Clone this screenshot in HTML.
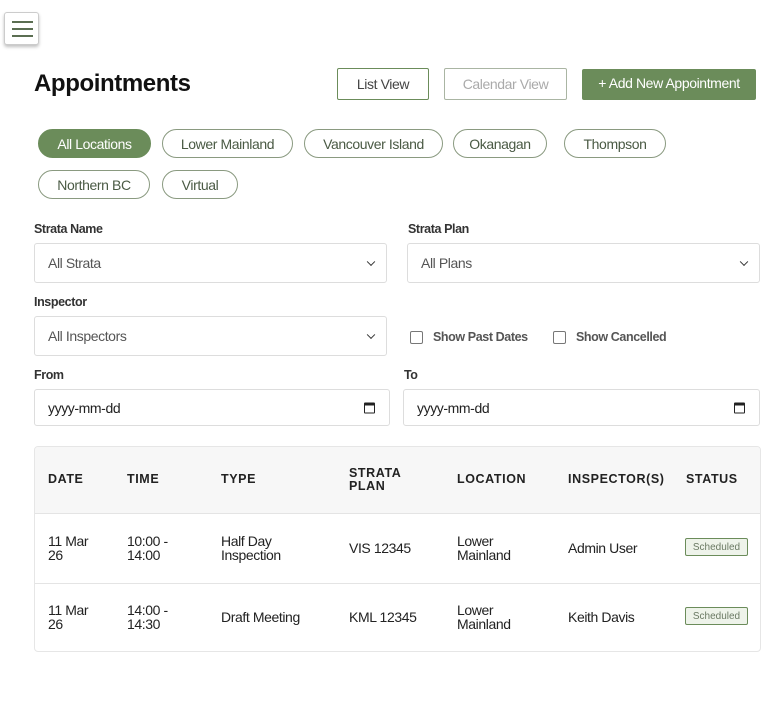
<!DOCTYPE html>
<html><head><meta charset="utf-8"><style>
*{box-sizing:border-box;margin:0;padding:0}
body{width:773px;height:709px;background:#fff;font-family:"Liberation Sans",Arial,sans-serif;color:#222;position:relative;overflow:hidden;letter-spacing:-0.4px}
.a{position:absolute}
.btn{position:absolute;border:1px solid #6b8c5a;border-radius:2px;font-size:14px;display:flex;align-items:center;justify-content:center;color:#444}
.pill{position:absolute;height:29px;border:1px solid #8a9a80;border-radius:15px;font-size:14px;color:#4a5a44;display:flex;align-items:center;justify-content:center}
.pill.on{background:#6b8c5a;color:#fff;border-color:#6b8c5a}
.lbl{position:absolute;font-size:12.5px;font-weight:bold;color:#333}
.sel{position:absolute;border:1px solid #ddd;border-radius:3px;font-size:14px;color:#555;padding-left:13px;display:flex;align-items:center}
.chev{position:absolute;right:12px;top:50%;width:6px;height:6px;border-right:1.5px solid #333;border-bottom:1.5px solid #333;transform:translateY(-70%) rotate(45deg)}
.cal{position:absolute;right:14px;top:50%;width:11px;height:11px;border:1.5px solid #222;border-top-width:3px;transform:translateY(-50%);border-radius:1px}
.cb{position:absolute;width:13px;height:13px;border:1px solid #777;border-radius:2px}
.th{position:absolute;font-size:12.5px;font-weight:bold;letter-spacing:0.6px;color:#222;line-height:13px}
.td{position:absolute;font-size:14px;color:#222;line-height:14px}
.badge{position:absolute;width:63px;height:18px;border:1px solid #6b8c5a;border-radius:2px;background:#eef3ea;font-size:10px;color:#6b7a64;display:flex;align-items:center;justify-content:center;letter-spacing:0}
</style></head><body>
<div class="a" style="left:4px;top:12px;width:35px;height:33px;border:1px solid #ccc;border-radius:3px;box-shadow:0 2px 3px rgba(0,0,0,.25);background:#fff"></div>
<div class="a" style="left:12px;top:21px;width:21px;height:2px;background:#5b6e52"></div>
<div class="a" style="left:12px;top:28px;width:21px;height:2px;background:#5b6e52"></div>
<div class="a" style="left:12px;top:35px;width:21px;height:2px;background:#5b6e52"></div>
<div class="a" style="left:34px;top:70px;font-size:24px;font-weight:bold;color:#111">Appointments</div>
<div class="btn" style="left:337px;top:68px;width:92px;height:32px">List View</div>
<div class="btn" style="left:444px;top:68px;width:123px;height:32px;border-color:#aab5a3;color:#aaa">Calendar View</div>
<div class="btn" style="left:582px;top:69px;width:174px;height:31px;background:#6b8c5a;color:#fff;padding-bottom:3px">+ Add New Appointment</div>
<div class="pill on" style="left:38px;top:129px;width:113px">All Locations</div>
<div class="pill" style="left:162px;top:129px;width:131px">Lower Mainland</div>
<div class="pill" style="left:304px;top:129px;width:139px">Vancouver Island</div>
<div class="pill" style="left:453px;top:129px;width:94px">Okanagan</div>
<div class="pill" style="left:564px;top:129px;width:102px">Thompson</div>
<div class="pill" style="left:38px;top:170px;width:112px">Northern BC</div>
<div class="pill" style="left:162px;top:170px;width:76px">Virtual</div>
<div class="lbl" style="left:34px;top:222px">Strata Name</div>
<div class="lbl" style="left:408px;top:222px">Strata Plan</div>
<div class="sel" style="left:34px;top:243px;width:353px;height:40px">All Strata<span class="chev"></span></div>
<div class="sel" style="left:407px;top:243px;width:353px;height:40px">All Plans<span class="chev"></span></div>
<div class="lbl" style="left:34px;top:295px">Inspector</div>
<div class="sel" style="left:34px;top:316px;width:353px;height:40px">All Inspectors<span class="chev"></span></div>
<div class="cb" style="left:410px;top:331px"></div>
<div class="lbl" style="left:433px;top:330px;color:#555">Show Past Dates</div>
<div class="cb" style="left:553px;top:331px"></div>
<div class="lbl" style="left:576px;top:330px;color:#555">Show Cancelled</div>
<div class="lbl" style="left:34px;top:368px">From</div>
<div class="lbl" style="left:404px;top:368px">To</div>
<div class="sel" style="left:34px;top:389px;width:356px;height:37px;color:#222">yyyy-mm-dd<span class="cal"></span></div>
<div class="sel" style="left:403px;top:389px;width:357px;height:37px;color:#222">yyyy-mm-dd<span class="cal"></span></div>
<div class="a" style="left:34px;top:446px;width:727px;height:206px;border:1px solid #e6e6e6;border-radius:4px;overflow:hidden">
 <div class="a" style="left:0;top:0;width:727px;height:67px;background:#f7f7f7;border-bottom:1px solid #e4e4e4"></div>
 <div class="a" style="left:0;top:136px;width:727px;height:1px;background:#e4e4e4"></div>
</div>
<div class="th" style="left:48px;top:473px">DATE</div>
<div class="th" style="left:127px;top:473px">TIME</div>
<div class="th" style="left:221px;top:473px">TYPE</div>
<div class="th" style="left:349px;top:467px">STRATA<br>PLAN</div>
<div class="th" style="left:457px;top:473px">LOCATION</div>
<div class="th" style="left:568px;top:473px">INSPECTOR(S)</div>
<div class="th" style="left:686px;top:473px">STATUS</div>
<div class="td" style="left:48px;top:534px">11 Mar<br>26</div>
<div class="td" style="left:127px;top:534px">10:00 -<br>14:00</div>
<div class="td" style="left:221px;top:534px">Half Day<br>Inspection</div>
<div class="td" style="left:349px;top:541px">VIS 12345</div>
<div class="td" style="left:457px;top:534px">Lower<br>Mainland</div>
<div class="td" style="left:568px;top:541px">Admin User</div>
<div class="badge" style="left:685px;top:538px">Scheduled</div>
<div class="td" style="left:48px;top:603px">11 Mar<br>26</div>
<div class="td" style="left:127px;top:603px">14:00 -<br>14:30</div>
<div class="td" style="left:221px;top:610px">Draft Meeting</div>
<div class="td" style="left:349px;top:610px">KML 12345</div>
<div class="td" style="left:457px;top:603px">Lower<br>Mainland</div>
<div class="td" style="left:568px;top:610px">Keith Davis</div>
<div class="badge" style="left:685px;top:607px">Scheduled</div>
</body></html>
